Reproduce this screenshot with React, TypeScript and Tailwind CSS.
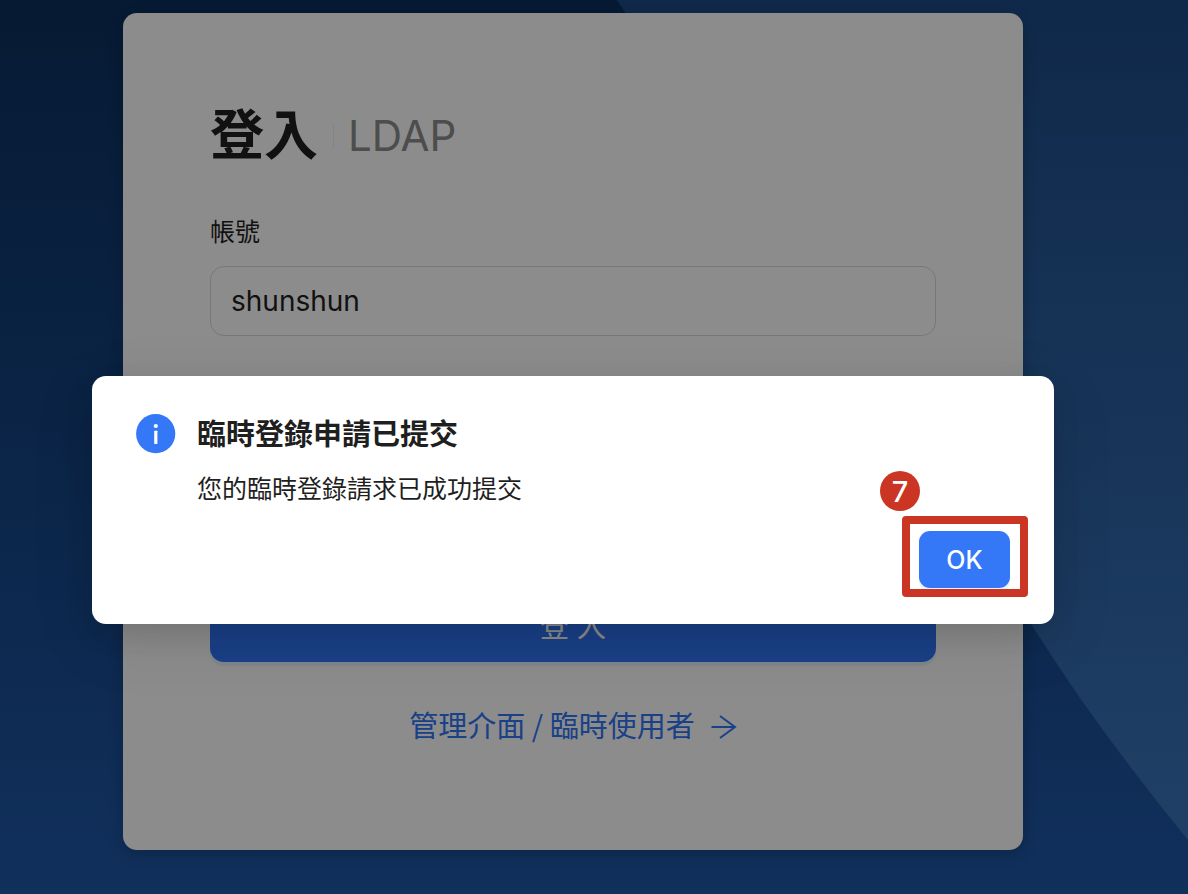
import { useState } from "react";

function Backdrop() {
  return (
    <svg
      aria-hidden="true"
      className="absolute inset-0 h-full w-full"
      viewBox="0 0 1188 894"
      preserveAspectRatio="none"
    >
      <defs>
        <linearGradient id="beam" x1="0" y1="0" x2="0" y2="1">
          <stop offset="0" stopColor="#1d4b87" />
          <stop offset="1" stopColor="#3a75bb" />
        </linearGradient>
      </defs>
      <path
        d="M617 0 L1031 624 Q1056 663 1080 698 Q1133 773 1188 840 V0 Z"
        fill="url(#beam)"
      />
    </svg>
  );
}

function ArrowRight() {
  return (
    <svg
      aria-hidden="true"
      className="h-7 w-[26px]"
      viewBox="0 0 26 28"
      fill="none"
      stroke="currentColor"
      strokeWidth="2"
    >
      <path d="M0.5 14H24M9 3L24 14L9 25" />
    </svg>
  );
}

function InfoIcon() {
  return (
    <svg aria-hidden="true" className="h-10 w-10 shrink-0" viewBox="0 0 40 40">
      <circle cx="19.7" cy="19.7" r="19.6" fill="#3478f7" />
      <circle cx="19.8" cy="12" r="2.1" fill="#fff" />
      <rect x="18.2" y="16.8" width="3.2" height="13.2" rx="0.4" fill="#fff" />
    </svg>
  );
}

function LoginCard() {
  const [account, setAccount] = useState("shunshun");
  return (
    <main className="relative mx-auto w-full max-w-[900px] rounded-[14px] bg-white px-[87px] pt-[85px] pb-[98px] shadow-[0_4px_16px_rgba(0,0,0,0.2)]">
      <h1 className="flex h-[76px] items-center text-[54px] leading-[76px] font-bold">
        登入
        <span className="ml-[15px] h-6 w-px bg-[#f0f0f0]" />
        <span className="ml-[14px] text-[42px] font-normal text-[#8c8c8c]">LDAP</span>
      </h1>
      <form onSubmit={(e) => e.preventDefault()}>
        <label htmlFor="account" className="mt-10 block text-[25px] leading-[36px]">
          帳號
        </label>
        <input
          id="account"
          value={account}
          onChange={(e) => setAccount(e.target.value)}
          className="mt-4 block h-[70px] w-full rounded-[14px] border border-[#d9d9d9] bg-white px-5 text-[28px] outline-none"
        />
        <button
          type="submit"
          className="mt-[256px] block h-[70px] w-full rounded-[14px] bg-[#3076f6] text-[29px] text-white shadow-[0_4px_0_rgba(5,145,255,0.1)]"
        >
          登 入
        </button>
      </form>
      <a
        href="#admin"
        className="mt-10 flex items-center justify-center gap-4 font-['Noto_Sans_CJK_TC',sans-serif] text-[29px] leading-[44px] text-[#3076f6]"
      >
        <span className="pb-[6px]">管理介面 / 臨時使用者</span>
        <ArrowRight />
      </a>
    </main>
  );
}

function SubmittedDialog() {
  return (
    <div
      role="alertdialog"
      aria-modal="true"
      aria-labelledby="dialog-title"
      aria-describedby="dialog-text"
      className="relative w-full max-w-[962px] rounded-[14px] bg-white px-11 pt-[38px] pb-9 shadow-[0_10px_28px_rgba(0,0,0,0.1),0_16px_64px_rgba(0,0,0,0.1)]"
    >
      <div className="flex items-start gap-[21px]">
        <InfoIcon />
        <div>
          <h2 id="dialog-title" className="text-[29px] leading-[42px] font-bold">
            臨時登錄申請已提交
          </h2>
          <p id="dialog-text" className="mt-[15px] text-[25px] leading-[36px]">
            您的臨時登錄請求已成功提交
          </p>
        </div>
      </div>
      <div className="mt-6 flex justify-end">
        <div className="relative">
          <button
            type="button"
            className="block h-[57px] w-[91px] rounded-[11px] bg-[#3478f7] pt-[2px] text-[25px] font-medium text-white shadow-[0_4px_0_rgba(5,145,255,0.1)]"
          >
            OK
          </button>
          <span className="pointer-events-none absolute -top-[15px] -right-[18px] -bottom-[9px] -left-[17px] rounded-[4px] border-8 border-[#cb3524]" />
          <span className="absolute -top-[60px] -left-[39px] flex h-10 w-10 items-center justify-center rounded-full bg-[#cb3524] text-[29px] leading-none font-medium text-white">
            7
          </span>
        </div>
      </div>
    </div>
  );
}

export default function App() {
  return (
    <div className="relative min-h-screen overflow-hidden bg-linear-to-b from-[#0c305e] to-[#1f58a8] pt-[13px] pr-[42px] pb-11 font-['Inter','Noto_Sans_CJK_TC',sans-serif] text-[#1f1f1f]">
      <Backdrop />
      <LoginCard />
      <div className="absolute inset-0 flex items-start justify-center bg-black/45 pt-[376px] pr-[42px]">
        <SubmittedDialog />
      </div>
    </div>
  );
}
